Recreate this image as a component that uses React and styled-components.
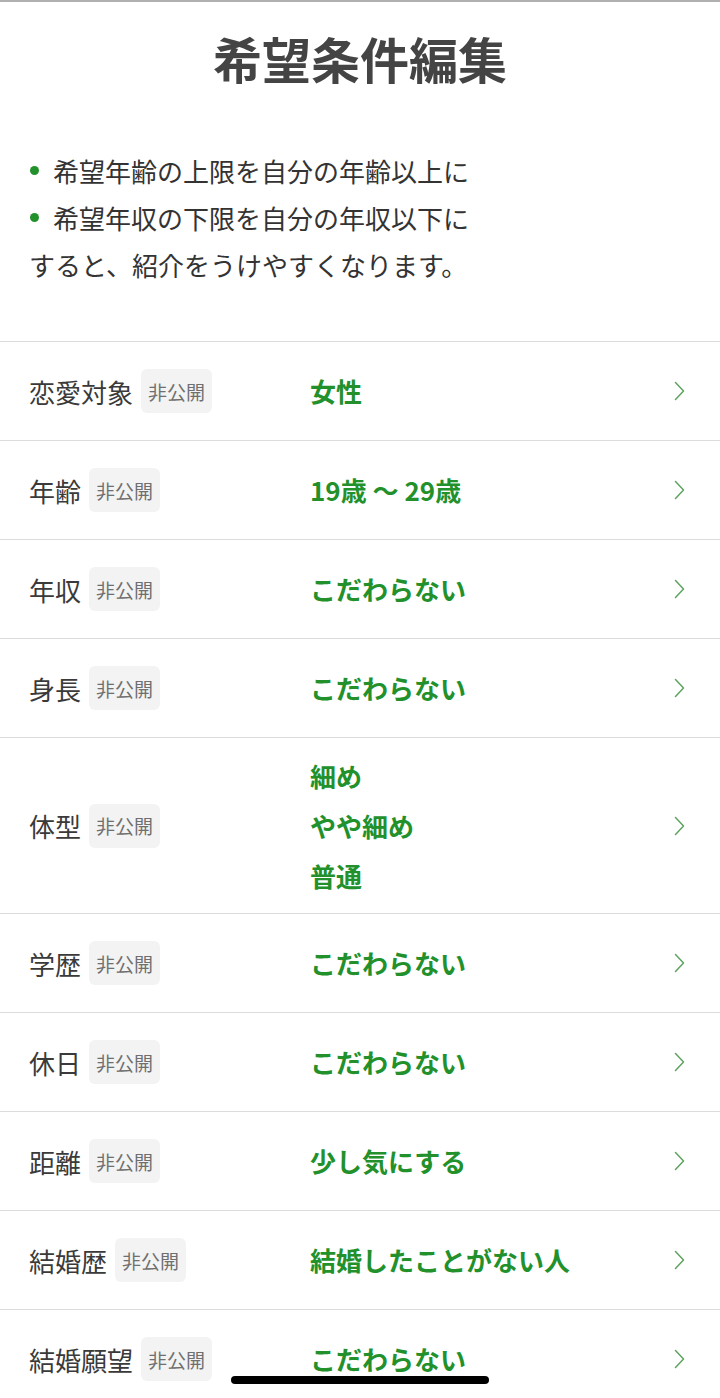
import styled, { createGlobalStyle } from 'styled-components';

const GlobalStyle = createGlobalStyle`
	html, body {
		margin: 0;
		padding: 0;
		background: #ffffff;
	}
	body {
		font-family: "Noto Sans CJK JP", "Noto Sans", sans-serif;
		color: #333333;
	}
`;

const Page = styled.div`
	border-top: 2px solid #b0b0b0;
	background: #ffffff;
	min-height: 1396px;
`;

const Title = styled.h1`
	margin: 0;
	padding-top: 22px;
	text-align: center;
	font-size: 49px;
	line-height: 67px;
	font-weight: 700;
	color: #444444;
`;

const Notes = styled.div`
	margin-top: 56px;
	padding: 0 0 53px 29px;
	font-size: 26px;
	line-height: 47px;
	color: #333333;
`;

const Bullet = styled.div`
	display: flex;
	align-items: center;
	gap: 14px;

	&::before {
		content: '';
		width: 9px;
		height: 9px;
		margin-left: 1px;
		border-radius: 50%;
		background: #22912c;
		flex-shrink: 0;
	}
`;

const List = styled.ul`
	list-style: none;
	margin: 0;
	padding: 0;
	border-top: 1px solid #dcdcdc;
`;

const Row = styled.li`
	display: grid;
	grid-template-columns: 281px 1fr 20px;
	align-items: center;
	min-height: 99px;
	padding: 12.5px 35px 12.5px 29px;
	box-sizing: border-box;
	border-bottom: 1px solid #dcdcdc;
`;

const LabelBox = styled.div`
	display: flex;
	align-items: center;
	gap: 8px;
`;

const Label = styled.span`
	font-size: 26px;
	color: #3a3a3a;
	white-space: nowrap;
`;

const Badge = styled.span`
	display: inline-flex;
	align-items: center;
	justify-content: center;
	height: 44px;
	padding: 0 7px;
	border-radius: 6px;
	background: #f3f3f3;
	font-size: 19px;
	color: #6f6f6f;
	white-space: nowrap;
`;

const Values = styled.div`
	display: flex;
	flex-direction: column;
`;

const Value = styled.span`
	font-size: 26px;
	line-height: 50px;
	font-weight: 700;
	color: #22912c;
	white-space: nowrap;
`;

const Chevron = styled.svg`
	justify-self: end;
	display: block;
`;

const HomeBar = styled.div`
	position: fixed;
	left: 50%;
	bottom: 14px;
	transform: translateX(-50%);
	width: 258px;
	height: 8px;
	border-radius: 4px;
	background: #000000;
`;

const rows = [
	{ label: '恋愛対象', values: ['女性'] },
	{ label: '年齢', values: ['19歳 〜 29歳'] },
	{ label: '年収', values: ['こだわらない'] },
	{ label: '身長', values: ['こだわらない'] },
	{ label: '体型', values: ['細め', 'やや細め', '普通'] },
	{ label: '学歴', values: ['こだわらない'] },
	{ label: '休日', values: ['こだわらない'] },
	{ label: '距離', values: ['少し気にする'] },
	{ label: '結婚歴', values: ['結婚したことがない人'] },
	{ label: '結婚願望', values: ['こだわらない'] },
];

const App = () => {
	return (
		<>
			<GlobalStyle />
			<Page>
				<Title>希望条件編集</Title>
				<Notes>
					<Bullet>希望年齢の上限を自分の年齢以上に</Bullet>
					<Bullet>希望年収の下限を自分の年収以下に</Bullet>
					<div>すると、紹介をうけやすくなります。</div>
				</Notes>
				<List>
					{rows.map((row) => (
						<Row key={row.label}>
							<LabelBox>
								<Label>{row.label}</Label>
								<Badge>非公開</Badge>
							</LabelBox>
							<Values>
								{row.values.map((v) => (
									<Value key={v}>{v}</Value>
								))}
							</Values>
							<Chevron width="11" height="20" viewBox="0 0 11 20">
								<polyline
									points="1.5,1.5 9.5,10 1.5,18.5"
									fill="none"
									stroke="#5da35f"
									strokeWidth="1.5"
									strokeLinecap="round"
									strokeLinejoin="round"
								/>
							</Chevron>
						</Row>
					))}
				</List>
			</Page>
			<HomeBar />
		</>
	);
};

export default App;
